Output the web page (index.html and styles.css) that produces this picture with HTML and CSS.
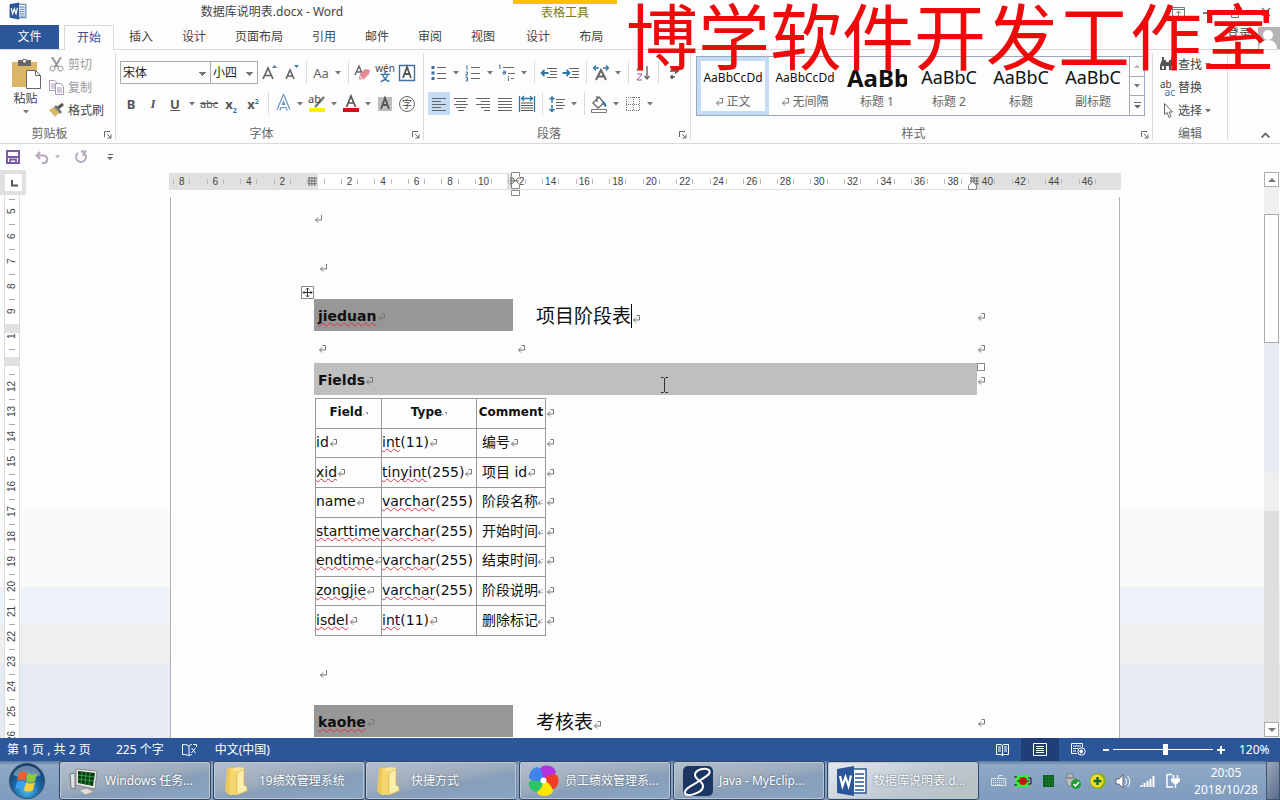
FILE: index.html
```html
<!DOCTYPE html>
<html lang="zh-CN">
<head>
<meta charset="utf-8">
<title>数据库说明表.docx - Word</title>
<link rel="stylesheet" href="styles.css">
</head>
<body>
<svg class="sprite" aria-hidden="true">
  <symbol id="dd" viewBox="0 0 6 4"><path d="M0 0h6L3 3.5z" fill="#777"/></symbol>
  <symbol id="ret" viewBox="0 0 8 8"><path d="M4.500 .5h3v4.500H1.500M4 2.500L1.500 5 4 7.500" fill="none" stroke="#777"/></symbol>
  <symbol id="para" viewBox="0 0 8 8"><path d="M7.500 0v5H1.500M4 2.500L1.500 5 4 7.500" fill="none" stroke="#777"/></symbol>
  <symbol id="cut" viewBox="0 0 5 8"><path d="M0 5h3M4 2v1M4 5v1M2 3L.5 5 2 7" fill="none" stroke="#777"/></symbol>
  <symbol id="dots" viewBox="0 0 5 8"><path d="M0 6.500h1M3 4.500h1.500v2" fill="none" stroke="#808080"/></symbol>
  <symbol id="launch" viewBox="0 0 8 8"><path d="M.5 6V.5H6M3 3l3.500 3.500M7 3.500V7H3.500" fill="none" stroke="#666"/></symbol>
  <symbol id="tblmark" viewBox="0 0 8 8"><path d="M1 0v8M3.500 0v8M6 0v8M0 1h8M0 3.500h8M0 6h8" stroke="#666" stroke-width=".8"/></symbol>
  <symbol id="folder" viewBox="0 0 28 32"><path d="M5 3l7-1 2 24-7 4-4-4z" fill="#e9c75a"/><path d="M8 4l9-2 5 1v20l-8 6-6 1z" fill="#f7e391"/><path d="M8 4l7 3v23l-8-1z" fill="#f3d66e"/><path d="M15 8l7-4v16l3 2v4l-3 1-7 3z" fill="#fbedaa" stroke="#d8b145" stroke-width=".6"/></symbol>
  <symbol id="word" viewBox="0 0 32 32"><path d="M16 4h14v24H16z" fill="#fff" stroke="#2b579a" stroke-width="1.500"/><path d="M19 9h9M19 13h9M19 17h9M19 21h9M19 25h9" stroke="#2b579a" stroke-width="1.500"/><path d="M1 4L18 1v30L1 28z" fill="#2b579a"/><path d="M4 11l2.500 10L9.500 12l3 9 2.500-10.500" fill="none" stroke="#fff" stroke-width="2.200"/></symbol>
</svg>

<header class="titlebar">
  <svg class="app-icon" viewBox="0 0 32 32"><use href="#word"/></svg>
  <h1 class="doc-title">数据库说明表.docx - Word</h1>
  <div class="context-title">表格工具</div>
  <div class="win-buttons">
    <button aria-label="功能区显示选项"><svg width="13" height="11" viewBox="0 0 13 11"><path d="M.5.500h12v10H.5zM.5 2.500h12M6.500 9V5M4 6.500L6.500 4 9 6.500" fill="none" stroke="#777"/></svg></button>
    <button aria-label="最小化"><svg width="12" height="10" viewBox="0 0 12 10"><path d="M1 6h10" stroke="#777" stroke-width="2"/></svg></button>
    <button aria-label="还原"><svg width="12" height="11" viewBox="0 0 12 11"><path d="M.5 4.500h7v6h-7zM3.500 4V1h7v6H8" fill="none" stroke="#777"/></svg></button>
    <button aria-label="关闭"><svg width="10" height="10" viewBox="0 0 10 10"><path d="M1 1l8 8M9 1L1 9" stroke="#777" stroke-width="1.600"/></svg></button>
  </div>
</header>

<nav class="tabs">
  <button class="tab file">文件</button>
  <button class="tab active">开始</button>
  <button class="tab">插入</button>
  <button class="tab">设计</button>
  <button class="tab">页面布局</button>
  <button class="tab">引用</button>
  <button class="tab">邮件</button>
  <button class="tab">审阅</button>
  <button class="tab">视图</button>
  <button class="tab ctx">设计</button>
  <button class="tab">布局</button>
  <a class="login" href="#">登录</a>
  <svg class="avatar" viewBox="0 0 22 22"><path d="M0 0h22v22H0z" fill="#b4b4b4"/><circle cx="10" cy="8" r="5" fill="#fff"/><path d="M1 22c0-6 4-9 9-9s9 3 9 9z" fill="#fff"/></svg>
</nav>

<section class="ribbon">
  <div class="group clipboard">
    <div class="group-body">
      <button class="paste"><svg width="30" height="32" viewBox="0 0 30 32"><path d="M1 4h25v25H1z" fill="#dcb667"/><path d="M7 2h4a3 3 0 0 1 5 0h4v6H7z" fill="#666"/><circle cx="13.500" cy="3" r="1.500" fill="#fff"/><path d="M15.500 12.500h9l5 5v13h-14z" fill="#fff" stroke="#666"/><path d="M24.500 12.500v5h5" fill="none" stroke="#666"/></svg><span>粘贴</span><svg class="arrow"><use href="#dd"/></svg></button>
      <div class="stack">
        <button class="line off"><svg width="15" height="15" viewBox="0 0 15 15"><path d="M3 0l6 10M12 0L6 10" stroke="#999" stroke-width="2"/><circle cx="3.500" cy="11.500" r="2.500" fill="none" stroke="#999"/><circle cx="11.500" cy="11.500" r="2.500" fill="none" stroke="#999"/></svg>剪切</button>
        <button class="line off"><svg width="15" height="15" viewBox="0 0 15 15"><path d="M.5.500h5l3 3v7h-8zM2 4h4M2 6h4M2 8h4" fill="none" stroke="#a79ab5"/><path d="M6.500 3.500h5l3 3v8h-8z" fill="#fdfdfd" stroke="#a79ab5"/><path d="M8 8h5M8 10h5M8 12h5" stroke="#a79ab5"/></svg>复制</button>
        <button class="line"><svg width="15" height="15" viewBox="0 0 15 15"><path d="M0 7l5-3 5 6-4 4z" fill="#dcb667"/><path d="M5 4l2-2 6 7-2 2z" fill="#777"/><path d="M9 5l5-4" stroke="#555" stroke-width="3"/></svg>格式刷</button>
      </div>
    </div>
    <div class="group-name">剪贴板<svg class="launcher"><use href="#launch"/></svg></div>
  </div>

  <div class="group font">
    <div class="group-body rows">
      <div class="row">
        <select class="font-name" aria-label="字体"><option>宋体</option></select>
        <select class="font-size" aria-label="字号"><option>小四</option></select>
        <button class="ib" aria-label="增大字号"><svg viewBox="0 0 20 20"><path d="M4 16L9 5l5 11M6 12.500h6" fill="none" stroke="#666" stroke-width="1.700"/><path d="M13 5h5l-2.500-3z" fill="#4478a8"/></svg></button>
        <button class="ib" aria-label="减小字号"><svg viewBox="0 0 20 20"><path d="M5 16L9 7l4 9M6.500 13h5" fill="none" stroke="#666" stroke-width="1.600"/><path d="M13 2h5l-2.500 3z" fill="#4478a8"/></svg></button>
        <i class="sep"></i>
        <button class="ib txt">Aa</button><button class="db" aria-label="更多"><svg><use href="#dd"/></svg></button>
        <i class="sep"></i>
        <button class="ib" aria-label="清除格式"><svg viewBox="0 0 20 20"><path d="M2 12L6 3l3 7M4 9h4" fill="none" stroke="#666" stroke-width="1.500"/><path d="M6 12l6-6 5 1-1 4-6 6-4-1z" fill="#e58c92"/><path d="M6 12l4 5" stroke="#fff"/></svg></button>
        <button class="ib pinyin" aria-label="拼音指南"><span>wén</span><b>文</b></button>
        <button class="ib" aria-label="字符边框"><svg viewBox="0 0 20 20"><path d="M2.500 2.500h15v15h-15z" fill="#fff" stroke="#41719c" stroke-width="1.400"/><path d="M6 15l4-11 4 11M7 11h6" fill="none" stroke="#555" stroke-width="1.800"/></svg></button>
      </div>
      <div class="row">
        <button class="ib glyph"><b>B</b></button>
        <button class="ib glyph"><b class="it">I</b></button>
        <button class="ib glyph"><b class="un">U</b></button><button class="db" aria-label="更多"><svg><use href="#dd"/></svg></button>
        <button class="ib glyph small"><s>abc</s></button>
        <button class="ib glyph"><b>x<sub>2</sub></b></button>
        <button class="ib glyph"><b>x<sup>2</sup></b></button>
        <i class="sep"></i>
        <button class="ib" aria-label="文本效果"><svg viewBox="0 0 20 20"><path d="M5.500 16l5-12 5 12M7.500 12h6" fill="none" stroke="#5b8fc4" stroke-width="4"/><path d="M5.500 16l5-12 5 12M7.500 12h6" fill="none" stroke="#fff" stroke-width="1.800"/></svg></button><button class="db" aria-label="更多"><svg><use href="#dd"/></svg></button>
        <button class="ib hl" aria-label="突出显示"><span>ab</span><svg viewBox="0 0 20 20"><path d="M8 13l9-10" stroke="#777" stroke-width="2.500"/><path d="M2 14h16v4H2z" fill="#ffef00"/></svg></button><button class="db" aria-label="更多"><svg><use href="#dd"/></svg></button>
        <button class="ib" aria-label="字体颜色"><svg viewBox="0 0 20 20"><path d="M5.500 13l4.500-11 4.500 11M7 9h6" fill="none" stroke="#555" stroke-width="1.700"/><path d="M2 14h16v4H2z" fill="#d0101c"/></svg></button><button class="db" aria-label="更多"><svg><use href="#dd"/></svg></button>
        <button class="ib" aria-label="字符底纹"><svg viewBox="0 0 20 20"><path d="M3 3h14v14H3z" fill="#bdbdbd"/><path d="M6 15l4-11 4 11M7 11h6" fill="none" stroke="#555" stroke-width="1.800"/></svg></button>
        <button class="ib circled"><span>字</span></button>
      </div>
    </div>
    <div class="group-name">字体<svg class="launcher"><use href="#launch"/></svg></div>
  </div>

  <div class="group paragraph">
    <div class="group-body rows">
      <div class="row">
        <button class="ib" aria-label="项目符号"><svg viewBox="0 0 20 20"><path d="M4 3v3M4 8.500v3M4 14v3" stroke="#41719c" stroke-width="3"/><path d="M8 4.500h9M8 10.500h9M8 15.500h9" stroke="#666"/></svg></button><button class="db" aria-label="更多"><svg><use href="#dd"/></svg></button>
        <button class="ib" aria-label="编号"><svg viewBox="0 0 20 20"><path d="M3 3h1v4M2.500 9h2v1.500l-2 1.500h2.500M2.500 14h2v4h-2M3 16h1.500" fill="none" stroke="#41719c"/><path d="M8 4.500h9M8 10.500h9M8 15.500h9" stroke="#666"/></svg></button><button class="db" aria-label="更多"><svg><use href="#dd"/></svg></button>
        <button class="ib" aria-label="多级列表"><svg viewBox="0 0 20 20"><path d="M2 2h1v4M6 8h2.500v3H6v-1.500h2.500M11.500 13v.800M11.500 14.500v3.500" fill="none" stroke="#41719c"/><path d="M6 4.500h11M11 10.500h7M14 15.500h3" stroke="#666"/></svg></button><button class="db" aria-label="更多"><svg><use href="#dd"/></svg></button>
        <i class="sep"></i>
        <button class="ib" aria-label="减少缩进"><svg viewBox="0 0 20 20"><path d="M2.500 10h7M5.500 7l-3 3 3 3" fill="none" stroke="#2e75a8" stroke-width="1.800"/><path d="M8 5.500h10M11 8.500h7M11 11.500h7M8 14.500h10" stroke="#666"/></svg></button>
        <button class="ib" aria-label="增加缩进"><svg viewBox="0 0 20 20"><path d="M1.500 10h7M5.500 7l3 3-3 3" fill="none" stroke="#2e75a8" stroke-width="1.800"/><path d="M8 5.500h10M11 8.500h7M11 11.500h7M8 14.500h10" stroke="#666"/></svg></button>
        <i class="sep"></i>
        <button class="ib" aria-label="中文版式"><svg viewBox="0 0 20 20"><path d="M5 17l5-10 5 10M7 13.500h6" fill="none" stroke="#666" stroke-width="2"/><path d="M8 5H2.500M5 2.500L2.500 5 5 7.500M12 5h5.500M15 2.500L17.500 5 15 7.500" fill="none" stroke="#2e75a8" stroke-width="1.300"/></svg></button><button class="db" aria-label="更多"><svg><use href="#dd"/></svg></button>
        <i class="sep"></i>
        <button class="ib" aria-label="排序"><svg viewBox="0 0 20 20"><path d="M4 8l2.500-6L9 8M5 6h3" fill="none" stroke="#41719c"/><path d="M4 11h5l-5 6h5" fill="none" stroke="#9a4f9a"/><path d="M14 3v13M11.500 13l2.500 3 2.500-3" fill="none" stroke="#666" stroke-width="1.400"/></svg></button>
        <i class="sep"></i>
        <button class="ib" aria-label="显示编辑标记"><svg viewBox="0 0 20 20"><path d="M7 8h8M12 5.500L15 8l-3 2.500M7 14h5M9 12v4" fill="none" stroke="#555" stroke-width="1.600"/></svg></button>
      </div>
      <div class="row">
        <button class="ib on" aria-label="左对齐"><svg viewBox="0 0 20 20"><path d="M3 4.500h14M3 7.500h9M3 10.500h14M3 13.500h9M3 16.500h14" stroke="#666"/></svg></button>
        <button class="ib" aria-label="居中"><svg viewBox="0 0 20 20"><path d="M3 4.500h14M5 7.500h10M3 10.500h14M5 13.500h10M7 16.500h6" stroke="#666"/></svg></button>
        <button class="ib" aria-label="右对齐"><svg viewBox="0 0 20 20"><path d="M3 4.500h14M8 7.500h9M3 10.500h14M8 13.500h9M11 16.500h6" stroke="#666"/></svg></button>
        <button class="ib" aria-label="两端对齐"><svg viewBox="0 0 20 20"><path d="M3 4.500h14M3 7.500h14M3 10.500h14M3 13.500h14M3 16.500h14" stroke="#666"/></svg></button>
        <button class="ib" aria-label="分散对齐"><svg viewBox="0 0 20 20"><path d="M2.500 2v16M17.500 2v16M5 4.500h10M7 2L4.500 4.500 7 7M13 2l2.500 2.500L13 7" fill="none" stroke="#2e75a8" stroke-width="1.300"/><path d="M4 9h12M4 11.500h12M4 14h12M4 16.500h12" stroke="#555" stroke-width="1.200"/></svg></button>
        <i class="sep"></i>
        <button class="ib" aria-label="行距"><svg viewBox="0 0 20 20"><path d="M5 3v6M5 11v7M2.500 5.500L5 3l2.500 2.500M2.500 15L5 17.500 7.500 15" fill="none" stroke="#2e75a8" stroke-width="1.400"/><path d="M9 5.500h9M9 8.500h7M9 11.500h9M9 14.500h7" stroke="#666"/></svg></button><button class="db" aria-label="更多"><svg><use href="#dd"/></svg></button>
        <i class="sep"></i>
        <button class="ib" aria-label="底纹"><svg viewBox="0 0 20 20"><path d="M4 9l6-6 5 6-6 5zM8 2v6" fill="none" stroke="#666" stroke-width="1.300"/><path d="M14 7c3 2 4 4 3 6-2 0-2-3-4-4z" fill="#2e75a8"/><path d="M2.500 15.500h15v3h-15z" fill="#fff" stroke="#777"/></svg></button><button class="db" aria-label="更多"><svg><use href="#dd"/></svg></button>
        <button class="ib" aria-label="边框"><svg viewBox="0 0 20 20"><path d="M3.500 3v14M10.500 3v14M16.500 3v14M3 3.500h14M3 10.500h14M3 16.500h14" stroke="#777" stroke-dasharray="1 1"/></svg></button><button class="db" aria-label="更多"><svg><use href="#dd"/></svg></button>
      </div>
    </div>
    <div class="group-name">段落<svg class="launcher"><use href="#launch"/></svg></div>
  </div>

  <div class="group styles">
    <div class="group-body">
      <div class="gallery">
        <button class="style sel"><span class="pv">AaBbCcDd</span><span class="nm"><svg class="mk"><use href="#ret"/></svg> 正文</span></button>
        <button class="style"><span class="pv">AaBbCcDd</span><span class="nm"><svg class="mk"><use href="#ret"/></svg> 无间隔</span></button>
        <button class="style"><span class="pv h1">AaBb</span><span class="nm">标题 1</span></button>
        <button class="style"><span class="pv h2">AaBbC</span><span class="nm">标题 2</span></button>
        <button class="style"><span class="pv h2">AaBbC</span><span class="nm">标题</span></button>
        <button class="style"><span class="pv h2">AaBbC</span><span class="nm">副标题</span></button>
        <div class="gal-scroll">
          <button aria-label="上"><svg viewBox="0 0 6 4"><path d="M0 4h6L3 .5z" fill="#bbb"/></svg></button>
          <button aria-label="下"><svg><use href="#dd"/></svg></button>
          <button aria-label="其他"><svg class="tall" viewBox="0 0 7 7"><path d="M0 .5h7" stroke="#666"/><path d="M0 3h7L3.500 6.500z" fill="#666"/></svg></button>
        </div>
      </div>
    </div>
    <div class="group-name">样式<svg class="launcher"><use href="#launch"/></svg></div>
  </div>

  <div class="group editing">
    <div class="group-body">
      <div class="stack">
        <button class="line"><svg width="15" height="15" viewBox="0 0 15 15"><path d="M2 3h4v10H0V8zM9 3h4l2 5v5H9zM6 5h3v4H6z" fill="#555"/><path d="M3 0v3M12 0v3" stroke="#555" stroke-width="2"/><path d="M2 9h2v3H2zM11 9h2v3h-2z" fill="#fff"/></svg>查找<svg class="arrow"><use href="#dd"/></svg></button>
        <button class="line"><span class="abac"><span>ab</span><span class="b2">ac</span></span>替换</button>
        <button class="line"><svg width="15" height="15" viewBox="0 0 15 15"><path d="M4.500.500v11l2.500-2 2 5 2-1-2-4.500h3.500z" fill="#fff" stroke="#666"/></svg>选择<svg class="arrow"><use href="#dd"/></svg></button>
      </div>
    </div>
    <div class="group-name">编辑</div>
  </div>
  <button class="collapse" aria-label="折叠功能区"><svg width="9" height="6" viewBox="0 0 9 6"><path d="M.5 5.500l4-4 4 4" fill="none" stroke="#666" stroke-width="1.800"/></svg></button>
</section>

<div class="qat">
  <button aria-label="保存"><svg width="14" height="14" viewBox="0 0 14 14"><path d="M1 1h12v12H1z" fill="#fff" stroke="#7a5ba5" stroke-width="2"/><path d="M1 7h12M4 13V9.500h6V13" fill="none" stroke="#7a5ba5" stroke-width="1.800"/></svg></button>
  <button class="undo" aria-label="撤消"><svg width="15" height="13" viewBox="0 0 15 13"><path d="M5 1L1.500 4.500 5 8M2 4.500h7a4 4 0 0 1 1 7.500H7" fill="none" stroke="#b5a9bd" stroke-width="2"/></svg></button>
  <button class="narrow" aria-label="撤消列表"><svg width="5" height="4" viewBox="0 0 6 4"><path d="M0 0h6L3 3.500z" fill="#b5b5b5"/></svg></button>
  <button class="redo" aria-label="重复"><svg width="14" height="14" viewBox="0 0 14 14"><path d="M4 3a5 5 0 1 0 6 0M7 1.500h5.500M9.500 1v5" fill="none" stroke="#b5a9bd" stroke-width="1.800"/></svg></button>
  <button class="more" aria-label="自定义"><svg width="7" height="7" viewBox="0 0 7 7"><path d="M1 .5h5" stroke="#666"/><path d="M0 3h6L3 6z" fill="#666"/></svg></button>
</div>

<main class="work">
  <div class="left-rail">
    <button class="tabstop" aria-label="制表符"><span><svg width="7" height="7" viewBox="0 0 7 7"><path d="M1 0v5.500h6" fill="none" stroke="#555" stroke-width="2"/></svg></span></button>
    <div class="vruler">
      <span>5</span><span>6</span><span>7</span><span>8</span><span>9</span><span class="edge-a">1</span><span class="edge-b"></span><span>12</span><span>13</span><span>14</span><span>15</span><span>16</span><span>17</span><span>18</span><span>19</span><span>20</span><span>21</span><span>22</span><span>23</span><span>24</span><span>25</span><span>26</span>
    </div>
  </div>

  <div class="canvas">
    <div class="hruler">
      <div class="scale">
        <span>8</span><span>6</span><span>4</span><span>2</span><span class="tm"><svg><use href="#tblmark"/></svg></span><span>2</span><span>4</span><span>6</span><span>8</span><span>10</span><span class="tm mid"><svg><use href="#tblmark"/></svg>2</span><span>14</span><span>16</span><span>18</span><span>20</span><span>22</span><span>24</span><span>26</span><span>28</span><span>30</span><span>32</span><span>34</span><span>36</span><span>38</span><span class="end"><svg><use href="#tblmark"/></svg>40</span><span>42</span><span>44</span><span>46</span>
      </div>
      <svg class="indent" viewBox="0 0 9 24"><path d="M.5.500h8v4l-4 4-4-4zM.5 16.500v-4l4-4 4 4v4zM.5 18.500h8v5h-8z" fill="#fff" stroke="#888"/></svg>
      <svg class="indent-r" viewBox="0 0 9 9"><path d="M.5 8.500v-4l4-4 4 4v4z" fill="#fff" stroke="#888"/></svg>
    </div>

    <article class="page">
      <p class="p-first"><svg class="mk"><use href="#para"/></svg></p>
      <p class="p-second"><svg class="mk"><use href="#para"/></svg></p>

      <div class="tbl-wrap">
        <svg class="handle" viewBox="0 0 13 13"><path d="M.5.500h12v12H.5z" fill="#fff" stroke="#888"/><path d="M6.500 2v9M2 6.500h9M5 3.500L6.500 2 8 3.500M5 9.500L6.500 11 8 9.500M3.500 5L2 6.500 3.500 8M9.500 5L11 6.500 9.500 8" fill="none" stroke="#333"/></svg>
        <i class="resize"></i>
        <table class="outer">
          <tr><th class="dark"><span class="sp">jieduan</span><svg class="mk"><use href="#ret"/></svg></th><td class="cap">项目阶段表<i class="caret"></i><svg class="mk"><use href="#ret"/></svg></td><td class="eor"><svg class="mk"><use href="#ret"/></svg></td></tr>
          <tr><td class="blank"><svg class="mk"><use href="#ret"/></svg></td><td class="blank"><svg class="mk"><use href="#ret"/></svg></td><td class="eor"><svg class="mk"><use href="#ret"/></svg></td></tr>
          <tr><th class="light" colspan="2">Fields<svg class="mk"><use href="#ret"/></svg></th><td class="eor"><svg class="mk"><use href="#ret"/></svg></td></tr>
        </table>
      </div>

      <table class="fields">
        <tr><th>Field<svg class="dt"><use href="#dots"/></svg></th><th>Type<svg class="dt"><use href="#dots"/></svg></th><th class="cm">Comment</th><td class="eor"><svg class="mk"><use href="#ret"/></svg></td></tr>
        <tr><td>id<svg class="mk"><use href="#ret"/></svg></td><td><span class="sp">int</span>(11)<svg class="mk"><use href="#ret"/></svg></td><td class="zh">编号<svg class="mk"><use href="#ret"/></svg></td><td class="eor"><svg class="mk"><use href="#ret"/></svg></td></tr>
        <tr><td><span class="sp">xid</span><svg class="mk"><use href="#ret"/></svg></td><td><span class="sp">tinyint</span>(255)<svg class="mk"><use href="#ret"/></svg></td><td class="zh">项目 id<svg class="mk"><use href="#ret"/></svg></td><td class="eor"><svg class="mk"><use href="#ret"/></svg></td></tr>
        <tr><td>name<svg class="mk"><use href="#ret"/></svg></td><td><span class="sp">varchar</span>(255)</td><td class="zh">阶段名称<svg class="ct"><use href="#cut"/></svg></td><td class="eor"><svg class="mk"><use href="#ret"/></svg></td></tr>
        <tr><td><span class="sp">starttime</span></td><td><span class="sp">varchar</span>(255)</td><td class="zh">开始时间<svg class="ct"><use href="#cut"/></svg></td><td class="eor"><svg class="mk"><use href="#ret"/></svg></td></tr>
        <tr><td><span class="sp">endtime</span><svg class="mk"><use href="#ret"/></svg></td><td><span class="sp">varchar</span>(255)</td><td class="zh">结束时间<svg class="ct"><use href="#cut"/></svg></td><td class="eor"><svg class="mk"><use href="#ret"/></svg></td></tr>
        <tr><td><span class="sp">zongjie</span><svg class="mk"><use href="#ret"/></svg></td><td><span class="sp">varchar</span>(255)</td><td class="zh">阶段说明<svg class="ct"><use href="#cut"/></svg></td><td class="eor"><svg class="mk"><use href="#ret"/></svg></td></tr>
        <tr><td><span class="sp">isdel</span><svg class="mk"><use href="#ret"/></svg></td><td><span class="sp">int</span>(11)<svg class="mk"><use href="#ret"/></svg></td><td class="zh">删除标记<svg class="ct"><use href="#cut"/></svg></td><td class="eor"><svg class="mk"><use href="#ret"/></svg></td></tr>
      </table>

      <p class="p-after"><svg class="mk"><use href="#para"/></svg></p>

      <table class="outer">
        <tr><th class="dark"><span class="sp">kaohe</span><svg class="mk"><use href="#ret"/></svg></th><td class="cap">考核表<svg class="mk"><use href="#ret"/></svg></td><td class="eor"><svg class="mk"><use href="#ret"/></svg></td></tr>
      </table>
      <svg class="ibeam" viewBox="0 0 9 16"><path d="M1 .5h2.500l1 1 1-1H8M4.500 1v14M1 15.500h2.500l1-1 1 1H8" fill="none" stroke="#333"/></svg>
    </article>
  </div>

  <div class="scrollbar">
    <button aria-label="向上滚动"><svg viewBox="0 0 8 4"><path d="M0 4h8L4 0z" fill="#777"/></svg></button>
    <div class="track"><div class="thumb"></div></div>
    <button aria-label="向下滚动"><svg viewBox="0 0 8 4"><path d="M0 0h8L4 4z" fill="#777"/></svg></button>
  </div>
</main>

<footer class="status">
  <span class="pages">第 1 页 , 共 2 页</span>
  <span>225 个字</span>
  <svg width="15" height="12" viewBox="0 0 15 12"><path d="M7 2C5 .5 3 .5.500.500v10c2.500 0 4.500 0 6.500 1.500V2c1-1 2-1.500 3-1.500M7 12c1-1 2-1.500 3-1.500M9.500 4l4 5M13.500 4l-4 5M11 .5h3.500V3" fill="none" stroke="#fff"/></svg>
  <span>中文(中国)</span>
  <div class="views">
    <button aria-label="阅读视图"><svg width="13" height="12" viewBox="0 0 13 12"><path d="M6.500 1.500L5 .5H.5v10H5l1.500 1 1.500-1h4.500V.5H8zv10M2 3h3M2 5h3M2 7h3M8 3h3M8 5h3M8 7h3" fill="none" stroke="#fff"/></svg></button>
    <button class="cur" aria-label="页面视图"><svg width="14" height="13" viewBox="0 0 14 13"><path d="M.5.500h13v12H.5zM3 3.500h8M3 5.500h8M3 7.500h8M3 9.500h8" fill="none" stroke="#fff"/></svg></button>
    <button aria-label="Web 版式视图"><svg width="15" height="13" viewBox="0 0 15 13"><path d="M6 10.500H.5V.5h11v4M2 3h8M2 5.500h5M2 8h3" fill="none" stroke="#fff"/><circle cx="10.500" cy="8.500" r="3.700" fill="#2b579a" stroke="#fff"/><path d="M8 8l3-2 1 3-2 2z" fill="#fff"/></svg></button>
  </div>
  <div class="zoom">
    <button aria-label="缩小"><svg width="6" height="8" viewBox="0 0 6 8"><path d="M0 4h6" stroke="#fff" stroke-width="2"/></svg></button>
    <input type="range" min="0" max="100" value="53" aria-label="缩放">
    <button aria-label="放大"><svg width="8" height="8" viewBox="0 0 8 8"><path d="M0 4h8M4 0v8" stroke="#fff" stroke-width="2"/></svg></button>
    <span>120%</span>
  </div>
</footer>

<div class="taskbar">
  <button class="start" aria-label="开始"><svg viewBox="0 0 38 38"><defs><radialGradient id="orb" cx=".5" cy=".75" r=".7"><stop offset="0" stop-color="#4fc8f0"/><stop offset=".5" stop-color="#1d6aa8"/><stop offset="1" stop-color="#123a66"/></radialGradient></defs><circle cx="19" cy="19" r="17.500" fill="url(#orb)" stroke="#34506f"/><path d="M5 13a15 15 0 0 1 28 0c-9 4-18 4-28 0z" fill="#fff" opacity=".35"/><path d="M11 11c3-2 5-2 8 0l-2 8c-3-2-5-2-8 0z" fill="#f0602c"/><path d="M20 11c3 2 6 2 9 0l-2 8c-3 2-6 2-9 0z" fill="#8fcc3c"/><path d="M9 20c3-2 5-2 8 0l-2 8c-3-2-5-2-8 0z" fill="#3aa0e8"/><path d="M18 20c3 2 6 2 9 0l-2 8c-3 2-6 2-9 0z" fill="#fcd03c"/></svg></button>
  <button class="task"><svg viewBox="0 0 32 32"><path d="M2 9l5-1v16l-4-1z" fill="#dfe3e6" stroke="#777"/><path d="M8 4l21 2-2 18-19-4z" fill="#e8e8e8" stroke="#888"/><path d="M10 6l17 2-2 13-15-3z" fill="#083c10"/><path d="M14 7l-1 12M18 7l-1 13M22 8l-1 12M10 10l16 2M10 14l16 2" stroke="#35a045"/><path d="M11 25l8-2 7 4-9 3z" fill="#ddd" stroke="#999"/></svg><span>Windows 任务...</span></button>
  <div class="pair">
    <button class="task"><svg viewBox="0 0 28 32"><use href="#folder"/></svg><span>19绩效管理系统</span></button>
    <button class="task"><svg viewBox="0 0 28 32"><use href="#folder"/></svg><span>快捷方式</span></button>
  </div>
  <button class="task"><svg viewBox="0 0 32 32"><path d="M15 15C10 11 10 3 15 1c7-2 12 2 13 6-2 5-8 8-13 8z" fill="#b431e0"/><path d="M15 15c4-5 10-7 14-5 3 6 1 12-3 14-5 0-10-4-11-9z" fill="#f23c28"/><path d="M15 15c6 2 10 8 10 12-4 5-12 5-16 1 0-5 2-11 6-13z" fill="#ffe600"/><path d="M15 15c0 6-3 11-7 12-5-1-8-6-7-10 4-4 10-5 14-2z" fill="#2cc66a"/><path d="M15 15C9 17 4 16 1 13c0-6 4-11 9-11 4 3 5 8 5 13z" fill="#3d84f0"/><circle cx="15.500" cy="15.500" r="3" fill="#fff"/></svg><span>员工绩效管理系...</span></button>
  <button class="task"><svg viewBox="0 0 32 32"><rect x="1" y="1" width="30" height="30" rx="5" fill="#1c3664"/><path d="M27 5C22 2 13 5 13 10c0 5 9 6 8 12-1 6-17 11-18 6-1-5 9-8 14-12 6-4 13-7 10-11z" fill="none" stroke="#fff" stroke-width="2"/></svg><span>Java - MyEclip...</span></button>
  <button class="task front"><svg viewBox="0 0 32 32"><use href="#word"/></svg><span>数据库说明表.d...</span></button>
  <div class="tray">
    <svg viewBox="0 0 18 18"><path d="M2.500 6.500h14v7h-14zM9.500 6V3.500h4" fill="none" stroke="#e4e4e4"/><path d="M4 8.500h11M4 10.500h11M6 12.500h7" stroke="#e4e4e4" stroke-dasharray="1 1"/></svg>
    <svg viewBox="0 0 18 18"><path d="M2 3h13v12H2z" fill="#35f03a"/><path d="M0 5h3M0 13h3M14 6h3v6h-3M3 9h12" fill="none" stroke="#111"/><circle cx="9" cy="9" r="4" fill="#c01818"/></svg>
    <svg viewBox="0 0 18 18"><path d="M4 3h11v12H4z" fill="#0b5a1c"/><path d="M4 6h11M4 9h11M4 12h11M7 3v12M10 3v12M13 3v12" stroke="#1f8535" stroke-width=".7"/></svg>
    <svg viewBox="0 0 18 18"><path d="M3 2h6v4H3zM1 6h10v4l-3 4H4z" fill="#bbb" stroke="#666" stroke-width=".6"/><circle cx="12" cy="12" r="5" fill="#1f9c35"/><path d="M9.500 12l2 2 3.500-4" fill="none" stroke="#fff" stroke-width="1.500"/></svg>
    <svg viewBox="0 0 18 18"><circle cx="9" cy="9" r="8" fill="#8cae18"/><circle cx="8" cy="9" r="6.500" fill="#f7dc20"/><path d="M4.500 9h8M8.500 5v8" stroke="#176a2c" stroke-width="2.500"/></svg>
    <svg viewBox="0 0 18 18"><path d="M2 7h3l4-4v13l-4-4H2z" fill="#fff" stroke="#667"/><path d="M11 6c2 2 2 5 0 7M13.500 4c3 3 3 8 0 11" fill="none" stroke="#fff"/></svg>
    <svg viewBox="0 0 18 18"><path d="M2.500 15v-2M5.500 15v-4M8.500 15V9M11.500 15V7M14.500 15V4" stroke="#fff" stroke-width="2"/></svg>
    <svg viewBox="0 0 18 18"><path d="M8 2.500H3v12.500h6" fill="none" stroke="#fff" stroke-width="1.500"/><path d="M9.500 3v4M13.500 3v4M11.500 11v5" stroke="#fff" stroke-width="1.500"/><path d="M7 6.500h9V9l-3 3h-3L7 9z" fill="#fff"/></svg>
  </div>
  <time class="clock"><span>20:05</span><span>2018/10/28</span></time>
  <button class="desktop" aria-label="显示桌面"></button>
</div>

<div class="watermark">博学软件开发工作室</div>
</body>
</html>
```

FILE: styles.css
```css
* { box-sizing: border-box; }

body {
  margin: 0;
  height: 100vh;
  display: flex;
  flex-direction: column;
  position: relative;
  overflow: hidden;
  background: #fdfdfd;
  color: #444;
  font: 12px/16px "Noto Sans", "Noto Sans CJK SC", sans-serif;
}

button, select {
  font: inherit;
  color: inherit;
  background: none;
  border: 0;
  padding: 0;
  margin: 0;
  border-radius: 0;
}

button {
  display: flex;
  align-items: center;
  justify-content: center;
  white-space: nowrap;
}

svg { display: block; flex: none; }
p { margin: 0; }
.sprite { position: absolute; width: 0; height: 0; }
.mk { display: inline-block; width: 8px; height: 8px; }
.arrow { width: 6px; height: 4px; }

/* Title bar */
.titlebar { display: flex; height: 24px; flex: none; }
.app-icon { width: 18px; height: 18px; margin: 2px 0 0 9px; }
.doc-title { margin: 0 0 0 170px; width: 150px; font-size: 12px; font-weight: 400; line-height: 24px; white-space: nowrap; text-align: center; }
.context-title {
  width: 104px;
  margin-left: 166px;
  border-top: 4px solid #ffc000;
  color: #7c7a1e;
  text-align: center;
  line-height: 18px;
}
.win-buttons { display: flex; margin-left: auto; }
.win-buttons button { width: 29px; }

/* Tabs */
.tabs { display: flex; gap: 1px; height: 26px; flex: none; padding-top: 1px; border-bottom: 1px solid #d9d9d9; }
.tab { padding: 0 14px; }
.tab.file { width: 59px; background: #2b579a; color: #fff; }
.tab.active {
  width: 50px;
  margin: 0 0 -1px 4px;
  border: 1px solid #d9d9d9;
  border-bottom: 0;
  background: #fdfdfd;
  color: #2b579a;
}
.tab.ctx { margin-left: 2px; }
.login { margin-left: auto; margin-right: 6px; color: #444; text-decoration: none; line-height: 18px; }
.avatar { width: 22px; height: 22px; align-self: flex-end; }

/* Ribbon */
.ribbon { display: flex; height: 94px; flex: none; border-bottom: 1px solid #d9d9d9; padding: 3px 0; }
.group { display: flex; flex-direction: column; border-right: 1px solid #dcdcdc; }
.group-body { flex: 1; display: flex; }
.group-name { position: relative; text-align: center; height: 16px; padding-right: 16px; color: #666; line-height: 20px; }
.launcher { position: absolute; right: 3px; bottom: 1px; width: 8px; height: 8px; }
.clipboard { width: 116px; }
.font { width: 308px; }
.paragraph { width: 267px; }
.styles { width: 462px; }
.editing { width: 75px; }
.editing .group-name { padding: 0; }

.paste { flex-direction: column; width: 49px; padding: 5px 0 0 2px; justify-content: flex-start; gap: 1px; }
.paste .arrow { margin-top: 2px; }
.stack { display: flex; flex-direction: column; }
.stack .line { height: 23px; gap: 4px; justify-content: flex-start; }
.line.off { color: #999; }
.editing .stack { padding-left: 7px; }
.editing .line { gap: 3px; }
.abac { display: flex; flex-direction: column; width: 15px; font-size: 10px; line-height: 8px; text-align: left; }
.abac .b2 { text-align: right; color: #41719c; }

.rows { flex-direction: column; padding: 8px 0 0 4px; gap: 8px; }
.paragraph .rows { padding-left: 4px; }
.row { display: flex; height: 23px; align-items: stretch; }
.ib { width: 22px; }
.ib > svg { width: 20px; height: 20px; }
.ib.on { background: #c5dcf5; }
.db { width: 12px; }
.db svg { width: 6px; height: 4px; }
.sep { width: 1px; margin: 0 3px 0 4px; background: #dcdcdc; }
.row select {
  appearance: none;
  height: 23px;
  border: 1px solid #ababab;
  padding-left: 2px;
  color: #222;
  background: linear-gradient(#777, #777) right 4px center / 7px 1px no-repeat,
    linear-gradient(#777, #777) right 5px top 11px / 5px 1px no-repeat,
    linear-gradient(#777, #777) right 6px top 12px / 3px 1px no-repeat,
    linear-gradient(#777, #777) right 7px top 13px / 1px 1px no-repeat;
}
.font-name { width: 91px; }
.row .font-size { width: 48px; margin-left: -1px; }
.txt { font-size: 13px; color: #666; }
.pinyin { flex-direction: column; font-size: 10px; line-height: 9px; }
.pinyin b { color: #2e75a8; }
.glyph { font-size: 13px; color: #555; }
.glyph sub, .glyph sup { font-size: 7px; line-height: 0; color: #2e75a8; }
.glyph.small { font-size: 11px; }
.it { font-style: italic; font-family: "Liberation Serif", serif; }
.un { text-decoration: underline; }
.hl { position: relative; }
.hl span { position: absolute; left: 2px; top: 0; font-size: 11px; line-height: 14px; }
.circled span { width: 16px; height: 16px; border: 1px solid #666; border-radius: 50%; font-size: 10px; line-height: 14px; }

.gallery { display: flex; height: 60px; margin: 3px 0 0 5px; border: 1px solid #9aa9bd; }
.style { width: 72px; flex-direction: column; justify-content: flex-start; border: 4px solid transparent; overflow: hidden; }
.style.sel { border-color: #c5dcf5; }
.pv { height: 33px; line-height: 33px; font-size: 12px; color: #111; width: 60px; overflow: hidden; }
.pv.h1 { font-size: 24px; font-weight: 700; }
.pv.h2 { font-size: 18px; }
.nm { color: #666; }
.gal-scroll { display: flex; flex-direction: column; width: 15px; border-left: 1px solid #ababab; }
.gal-scroll button { flex: 1; }
.gal-scroll button + button { border-top: 1px solid #ababab; }
.gal-scroll svg { width: 6px; height: 4px; }
.gal-scroll .tall { width: 7px; height: 7px; }
.collapse { margin: auto 10px 2px auto; }

/* Quick access */
.qat { display: flex; height: 26px; flex: none; padding-left: 2px; }
.qat button { width: 22px; }
.qat .undo { margin-left: 7px; }
.qat .narrow { width: 8px; }
.qat .redo { margin-left: 9px; }
.qat .more { margin-left: 7px; }

/* Work area */
.work {
  flex: 1;
  min-height: 0;
  display: flex;
  background: linear-gradient(#fdfdfd 340px, #fafafa 340px 417px, #edf3f8 417px 455px, #efefef 455px 493px, #e6eaf2 493px);
}
.left-rail { width: 26px; display: flex; flex-direction: column; overflow: hidden; }
.tabstop { width: 26px; height: 25px; flex: none; background: #e0e0e0; }
.tabstop span { display: flex; align-items: center; justify-content: center; width: 17px; height: 17px; background: #fff; padding: 2px 0 0 2px; }
.vruler { width: 16px; margin-left: 4px; padding-top: 4px; background: #fff; border: 1px solid #dcdcdc; border-width: 0 1px; }
.vruler span {
  display: block;
  height: 25px;
  width: 14px;
  writing-mode: vertical-rl;
  transform: rotate(180deg);
  text-align: center;
  font: 10px/14px "Liberation Sans", sans-serif;
  background: linear-gradient(#aaa, #aaa) center bottom / 6px 1px no-repeat;
}
.vruler .edge-a { background: linear-gradient(#e0e0e0, #e0e0e0) bottom / 14px 9px no-repeat; }
.vruler .edge-b { background: linear-gradient(#e0e0e0, #e0e0e0) center 8px / 14px 9px no-repeat, linear-gradient(#aaa, #aaa) center bottom / 6px 1px no-repeat; }

.canvas { flex: 1; min-width: 0; display: flex; flex-direction: column; align-items: center; overflow: hidden; }
.hruler {
  position: relative;
  flex: none;
  width: 952px;
  height: 15px;
  margin: 4px 0 8px;
  background: linear-gradient(90deg, #e0e0e0 149px, #fff 149px 338px, #e0e0e0 338px 348px, #fff 348px 802px, #e0e0e0 802px);
  box-shadow: 0 1px #e0e0e0, 0 -1px #e0e0e0;
}
.scale { display: grid; grid-template-columns: repeat(28, 1fr); margin: 0 17px 0 -4px; }
.scale span {
  display: flex;
  align-items: center;
  justify-content: center;
  height: 15px;
  font: 10px/15px "Liberation Sans", sans-serif;
  background: linear-gradient(#bbb, #bbb) 25% center / 1px 5px no-repeat, linear-gradient(#bbb, #bbb) 75% center / 1px 5px no-repeat;
}
.scale svg { width: 9px; height: 9px; }
.scale .tm { padding-right: 7px; }
.scale .mid { padding-right: 0; }
.scale .end { justify-content: flex-start; gap: 3px; background-size: 0 0, 1px 5px; }
.indent { position: absolute; left: 342px; top: -2px; width: 9px; height: 24px; }
.indent-r { position: absolute; left: 799px; top: 7px; width: 9px; height: 9px; }

.page {
  position: relative;
  flex: 1;
  min-height: 0;
  width: 950px;
  overflow: hidden;
  padding-left: 143px;
  background: #fdfdfd;
  border: 1px solid #b0b0b0;
  border-width: 0 1px;
  color: #111;
  font: 14px/20px "DejaVu Sans", "Noto Sans CJK SC", sans-serif;
}
.p-first { height: 42px; line-height: 42px; }
.p-second { height: 60px; padding-left: 5px; line-height: 56px; }
.p-after { height: 69px; padding-left: 5px; line-height: 74px; }
.tbl-wrap { position: relative; width: 675px; }
.handle { position: absolute; left: -13px; top: -13px; width: 13px; height: 13px; }
.resize { position: absolute; left: 663px; top: 64px; width: 8px; height: 8px; border: 1px solid #888; background: #fff; }
table { border-spacing: 0; border-collapse: collapse; table-layout: fixed; }
th, td { padding: 0; white-space: nowrap; text-align: left; }
.outer { width: 675px; }
.outer tr { height: 32px; }
.outer th { padding: 2px 0 0 4px; }
.outer .dark { width: 199px; background: #979797; }
.outer .light { background: #bfbfbf; }
.outer .eor { width: 12px; padding-top: 1px; }
.outer .blank { padding: 1px 0 0 4px; }
.outer .cap { padding-left: 23px; font: 19px/26px "Noto Sans CJK SC", sans-serif; }
.outer tr:has(.cap) { line-height: 18px; }
.caret { display: inline-block; width: 1px; height: 24px; background: #000; vertical-align: -5px; }
.sp { text-decoration: underline wavy #e0304a 1px; text-underline-offset: 1px; text-decoration-skip-ink: none; }
.fields { width: 240px; height: 238px; margin: 3px 0 0 1px; }
.fields th, .fields td { border: 1px solid #999; padding-bottom: 2px; line-height: 18px; }
.fields th { width: 95px; text-align: center; font-size: 12px; }
.fields th:first-child { width: 66px; }
.fields th.cm { width: 69px; }
.fields .zh { padding-left: 5px; }
.fields .eor { border: 0; width: 10px; }
.dt, .ct { display: inline-block; width: 5px; height: 8px; }
.ibeam { position: absolute; left: 489px; top: 180px; width: 9px; height: 16px; }

.scrollbar { width: 16px; padding: 2px 2px 1px 0; display: flex; flex-direction: column; }
.scrollbar button { height: 15px; width: 15px; border: 1px solid #ababab; background: #fff; }
.scrollbar svg { width: 8px; height: 4px; }
.track { flex: 1; width: 15px; padding-top: 27px; background: linear-gradient(#efefef 155px, #e6eaf2 155px 286px, #efefef 286px 324px, #dedede 324px); }
.thumb { height: 129px; background: #fff; border: 1px solid #ababab; }

/* Status bar */
.status { display: flex; align-items: center; height: 23px; flex: none; padding: 0 9px 0 7px; gap: 18px; background: #2b579a; color: #fff; }
.pages { width: 91px; }
.views { display: flex; margin-left: auto; align-self: stretch; }
.views button { width: 38px; }
.views .cur { background: #1f3f78; }
.zoom { display: flex; align-items: center; gap: 4px; margin-left: -12px; }
.zoom input { appearance: none; width: 100px; height: 12px; margin: 0; background: linear-gradient(#fff, #fff) center / 100% 1px no-repeat; }
.zoom input::-webkit-slider-thumb { appearance: none; width: 5px; height: 11px; background: #fff; }
.zoom span { width: 32px; margin-left: 10px; }

/* Taskbar */
.taskbar { display: flex; height: 39px; flex: none; gap: 2px; background: linear-gradient(#5f789a, #8ea9c6 4px, #7f9bbd); color: #fff; }
.start { width: 57px; padding-right: 3px; }
.start svg { width: 38px; height: 38px; }
.task {
  width: 152px;
  justify-content: flex-start;
  gap: 5px;
  padding-left: 8px;
  border: 1px solid #34475f;
  border-radius: 3px;
  box-shadow: inset 0 0 0 1px #b9c8d8;
  background: linear-gradient(170deg, #b3bfcd, #9dacbd 45%, #879fb9 60%, #89a3c0);
  font-size: 12px;
  text-shadow: 0 0 2px #456;
}
.task svg { width: 32px; height: 32px; }
.pair { display: flex; }
.pair .task { border-right-color: #7489a0; }
.pair .task svg { width: 28px; }
.pair .task span { padding-left: 4px; }
.task.front { background: linear-gradient(150deg, #e4e9ee, #bcc6d0 60%, #b8c2c0); }
.tray { display: flex; align-items: center; gap: 7px; margin-left: auto; }
.tray svg { width: 18px; height: 18px; }
.clock { display: flex; flex-direction: column; justify-content: center; width: 76px; text-align: center; line-height: 17px; margin-left: 4px; }
.desktop { width: 14px; border: 1px solid #43546c; background: linear-gradient(120deg, #9aa8b8, #586c8c); }

.watermark {
  position: absolute;
  right: 6px;
  top: -5px;
  color: #ee0a0a;
  font: 72px/76px "Noto Sans CJK SC", sans-serif;
  white-space: nowrap;
  pointer-events: none;
}
```
